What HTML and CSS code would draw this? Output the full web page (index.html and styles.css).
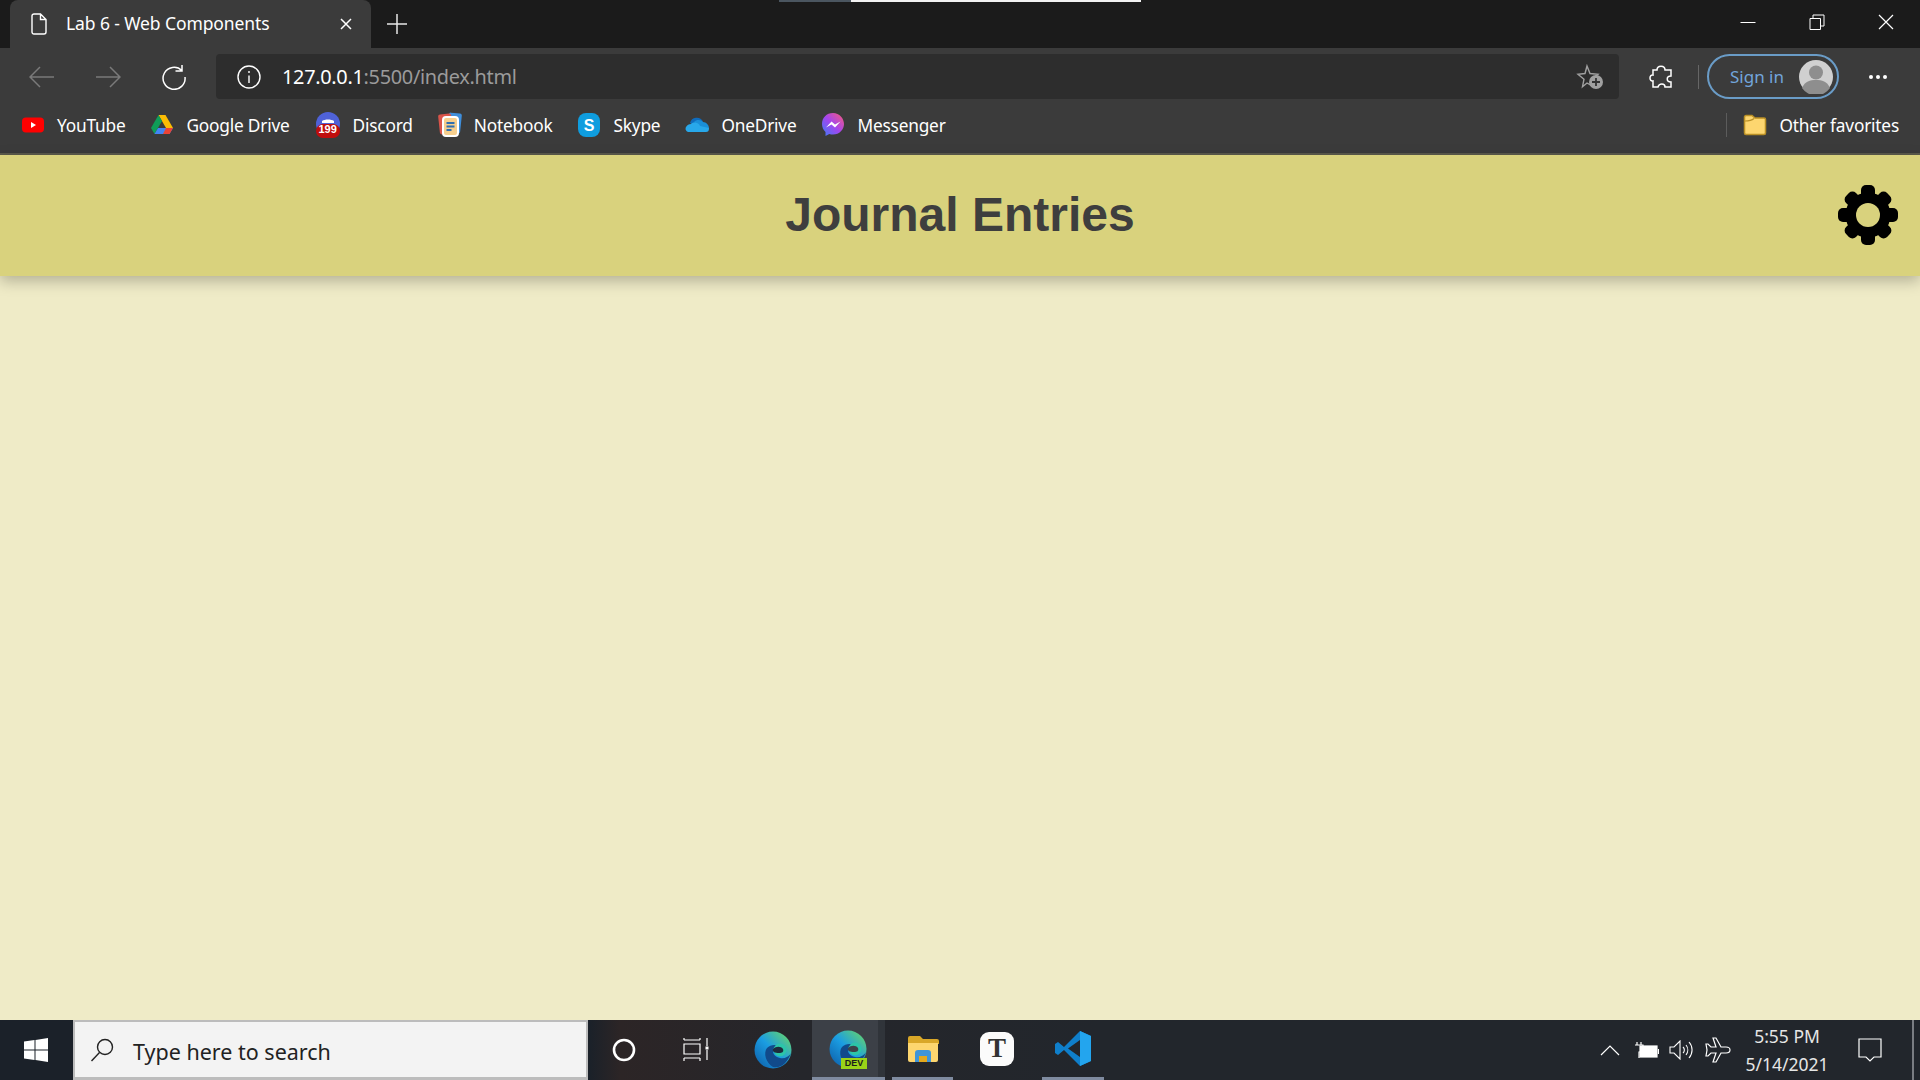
FILE: index.html

```html
<!DOCTYPE html>
<html>
<head>
  <meta charset="utf-8">
  <title>Lab 6 - Web Components</title>
  <link rel="stylesheet" href="styles.css">
</head>
<body>
  <div class="tab-strip">
    <div class="tab">
      <svg class="tab-doc" width="16" height="22" viewBox="0 0 16 22" fill="none" stroke="#fff" stroke-width="1.4"><path d="M3 1h6.5L15 6.500V19a2 2 0 0 1-2 2H3a2 2 0 0 1-2-2V3a2 2 0 0 1 2-2zM9.500 1v5.500H15"/></svg>
      <span class="tab-title">Lab 6 - Web Components</span>
      <svg class="tab-close" width="14" height="14" viewBox="0 0 14 14" stroke="#fff" stroke-width="1.500"><path d="M2 2l10 10M12 2L2 12"/></svg>
    </div>
    <svg class="tab-new" width="22" height="22" viewBox="0 0 22 22" stroke="#e8e8e8" stroke-width="1.500"><path d="M11 1v20M1 11h20"/></svg>
    <div class="progress"><div class="progress-dim"></div><div class="progress-lit"></div></div>
    <div class="window-btns">
      <svg width="16" height="16" viewBox="0 0 16 16" stroke="#fff"><path d="M0.500 8.500h15"/></svg>
      <svg width="16" height="16" viewBox="0 0 16 16" stroke="#fff" fill="none"><path d="M1 4.500h10.500v11H1zM4 4.500V1h11v11h-3.500"/></svg>
      <svg width="16" height="16" viewBox="0 0 16 16" stroke="#fff" stroke-width="1.200"><path d="M1 1l14 14M15 1L1 15"/></svg>
    </div>
  </div>

  <div class="toolbar">
    <svg class="nav-back" width="26" height="22" viewBox="0 0 26 22" fill="none" stroke="#7a7a7a" stroke-width="1.500"><path d="M1 11h24M11 1L1 11l10 10"/></svg>
    <svg class="nav-fwd" width="26" height="22" viewBox="0 0 26 22" fill="none" stroke="#7a7a7a" stroke-width="1.500"><path d="M1 11h24M15 1l10 10-10 10"/></svg>
    <svg class="nav-reload" width="26" height="26" viewBox="0 0 26 26" fill="none" stroke="#fff" stroke-width="1.500"><path d="M20.800 6.500A11 11 0 1 0 24 13M21 1v6h-6.500"/></svg>
    <div class="address">
      <svg class="addr-info" width="24" height="24" viewBox="0 0 24 24" fill="none" stroke="#fff" stroke-width="1.400"><circle cx="12" cy="12" r="11"/><path d="M12 10.500V18M12 6v2"/></svg>
      <span class="url"><span class="url-host">127.0.0.1</span>:5500/index.html</span>
      <svg class="addr-star" width="28" height="26" viewBox="0 0 28 26" fill="none" stroke="#a0a0a0" stroke-width="1.400"><path d="M11 2l3 7.500 8 .7-6 5 1.500 7.500L11 19l-4.500 3.700L8 15.200l-6-5 7-.7z"/><circle cx="20" cy="18" r="7" fill="#a0a0a0" stroke="none"/><path d="M20 14v8M16 18h8" stroke="#333" stroke-width="1.800"/></svg>
    </div>
    <svg class="tool-ext" width="24" height="26" viewBox="0 0 24 26" fill="none" stroke="#fff" stroke-width="1.500"><path d="M8 6c0-5 8-5 8 0h6v6c-5 0-5 6 0 6v5h-6c0-4-6-4-7 0H4v-6c-4 1-4-7 0-6V6z"/></svg>
    <div class="tool-divider"></div>
    <div class="signin">
      <span>Sign in</span>
      <svg width="34" height="34" viewBox="0 0 34 34"><circle cx="17" cy="17" r="17" fill="#d0d0d0"/><circle cx="17" cy="12.500" r="7" fill="#8e8e8e"/><path d="M3 28c3-7 8-8 14-8s11 1 14 8a17 17 0 0 1-28 0z" fill="#8e8e8e"/></svg>
    </div>
    <svg class="tool-more" width="20" height="6" viewBox="0 0 20 6" fill="#fff"><circle cx="3" cy="3" r="2"/><circle cx="10" cy="3" r="2"/><circle cx="17" cy="3" r="2"/></svg>
  </div>

  <div class="bookmarks">
    <div class="bm">
      <svg width="24" height="24" viewBox="0 0 24 24"><rect x="1" y="4.500" width="22" height="15" rx="4" fill="#f00"/><path d="M10 9v6l5-3z" fill="#fff"/></svg>
      <span>YouTube</span>
    </div>
    <div class="bm">
      <svg width="24" height="24" viewBox="0 0 24 24"><path d="M8.500 2h7L23 15h-7z" fill="#fbbc04"/><path d="M8.500 2L1 15l3.500 6L12 8z" fill="#0f9d58"/><path d="M8 15h15l-3.500 6h-15z" fill="#4285f4"/><path d="M16 15h7l-3.500 6H13z" fill="#ea4335"/></svg>
      <span>Google Drive</span>
    </div>
    <div class="bm bm-discord">
      <svg width="26" height="26" viewBox="0 0 26 26"><circle cx="13" cy="12" r="12" fill="#4f62d8"/><path d="M7 9c3-2 9-2 12 0v2H7z" fill="#fff"/><rect x="1" y="12" width="24" height="14" rx="7" fill="#c00d0d"/></svg>
      <span class="badge">199</span>
      <span>Discord</span>
    </div>
    <div class="bm">
      <svg width="24" height="26" viewBox="0 0 24 26"><rect x="10" y="1" width="13" height="20" rx="2" fill="#3f8fdc" transform="rotate(6 16 11)"/><rect x="1" y="2" width="13" height="20" rx="2" fill="#d9544a" transform="rotate(-6 7 12)"/><rect x="5" y="5" width="15" height="19" rx="3" fill="#f6cf8e" stroke="#fff" stroke-width="2"/><path d="M8.500 11h8M8.500 14.500h8M8.500 18h5" stroke="#2f6fb0" stroke-width="1.800"/></svg>
      <span>Notebook</span>
    </div>
    <div class="bm">
      <svg width="24" height="26" viewBox="0 0 24 26"><rect x="1" y="1" width="22" height="24" rx="8" fill="#0f9ddf"/><text x="12" y="18.500" class="skype-s">S</text></svg>
      <span>Skype</span>
    </div>
    <div class="bm">
      <svg width="24" height="24" viewBox="0 0 24 24"><path d="M5 10a7 7 0 0 1 13-1.500L12 14z" fill="#0f6cbd"/><path d="M9 9c3-3 7-2 9 0 3 0 6 3 6 6l-9 1z" fill="#1a8fd8"/><path d="M3 19a3.500 3.500 0 0 1-2-5c1-2 3-3 5-3 3-3 8-1 9 2l9 2c0 3-1 4-3 4z" fill="#28a8ea"/></svg>
      <span>OneDrive</span>
    </div>
    <div class="bm">
      <svg width="24" height="26" viewBox="0 0 24 26"><defs><linearGradient id="msgr" x1="0" y1="1" x2="1" y2="0"><stop offset="0" stop-color="#3c7cf6"/><stop offset=".5" stop-color="#a445ee"/><stop offset="1" stop-color="#fb5b78"/></linearGradient></defs><path d="M12 1C5.500 1 1 5.700 1 12c0 3.300 1.300 6 3.500 8v4l3.800-2.100c1.200.4 2.400.6 3.700.6 6.500 0 11-4.900 11-10.500S18.500 1 12 1z" fill="url(#msgr)"/><path d="M5 15.500L10.500 9.500l3.500 3 5.500-3-5.500 6-3.500-3z" fill="#fff"/></svg>
      <span>Messenger</span>
    </div>
    <div class="bm-divider"></div>
    <div class="bm bm-other">
      <svg width="24" height="22" viewBox="0 0 24 22"><path d="M1.500 3a1.500 1.500 0 0 1 1.500-1.500h6L12 4h9a1.500 1.500 0 0 1 1.500 1.500V19a1.500 1.500 0 0 1-1.500 1.500H3A1.500 1.500 0 0 1 1.500 19z" fill="#fdd66f" stroke="#b98f25" stroke-width="1.500"/><path d="M2 7c3 0 6 0 9-2.500" fill="none" stroke="#b98f25" stroke-width="1.200"/></svg>
      <span>Other favorites</span>
    </div>
  </div>

  <div class="page">
    <header class="site-header">
      <div></div>
      <h1>Journal Entries</h1>
      <svg class="gear" width="60" height="60" viewBox="0 0 60 60">
        <circle cx="30" cy="30" r="17.500" fill="none" stroke="#000" stroke-width="10"/>
        <rect x="23" y="0" width="14" height="60" rx="5"/>
        <rect x="23" y="1" width="14" height="58" rx="5" transform="rotate(45 30 30)"/>
        <rect x="23" y="0" width="14" height="60" rx="5" transform="rotate(90 30 30)"/>
        <rect x="23" y="1" width="14" height="58" rx="5" transform="rotate(135 30 30)"/>
        <circle cx="30" cy="30" r="12" class="gear-hole"/>
      </svg>
    </header>
  </div>

  <div class="taskbar">
    <div class="start">
      <svg width="24" height="24" viewBox="0 0 24 24" fill="#fff"><path d="M0 3.500l10.500-1.400v9.400H0zM11.500 2L24 0v11.500H11.500zM0 12.500h10.500v9.400L0 20.500zM11.500 12.500H24V24l-12.500-2z"/></svg>
    </div>
    <div class="search">
      <svg width="24" height="24" viewBox="0 0 24 24" fill="none" stroke="#222" stroke-width="1.400"><circle cx="15" cy="9" r="7.500"/><path d="M9.500 14.500L1.500 23"/></svg>
      <span class="search-text">Type here to search</span>
    </div>
    <div class="task-icon cortana"><svg width="24" height="24" viewBox="0 0 24 24" fill="none" stroke="#fff" stroke-width="2.600"><circle cx="12" cy="12" r="10"/></svg></div>
    <div class="task-icon taskview"><svg width="26" height="24" viewBox="0 0 26 24" fill="none" stroke="#fff" stroke-width="1.200"><path d="M1 3h16M1 1v2M17 1v2M1 7h16v10H1zM1 21h16M1 21v3M17 21v3M24 1v8M24 13v10"/><rect x="22.500" y="9.500" width="3" height="3" fill="#fff" stroke="none"/></svg></div>
    <div class="task-icon edge">
      <svg width="38" height="38" viewBox="0 0 38 38"><defs><linearGradient id="edg" x1="0" y1="1" x2="1" y2="0"><stop offset="0" stop-color="#0c59a4"/><stop offset=".5" stop-color="#1b9de2"/><stop offset="1" stop-color="#6fdc5c"/></linearGradient></defs><circle cx="19" cy="19" r="18.500" fill="url(#edg)"/><path d="M37 22c-2 4-7 6-11 5-5-1-9-5-6-10 1-2 3-2 4-2-3-2-8-1-11 2-4 5-1 15 6 19 8 2 15-5 18-14z" fill="#114a8b"/><circle cx="26" cy="19" r="6.500" fill="#2cc5a8"/><path d="M19 18c3-3 8-3 10 0 1 3-1 4-4 4-4 0-7-1-6-4z" fill="#1d2b3d"/></svg>
    </div>
    <div class="task-icon edge-dev">
      <svg width="38" height="38" viewBox="0 0 38 38"><circle cx="19" cy="19" r="18.500" fill="url(#edg)"/><path d="M37 22c-2 4-7 6-11 5-5-1-9-5-6-10 1-2 3-2 4-2-3-2-8-1-11 2-4 5-1 15 6 19 8 2 15-5 18-14z" fill="#114a8b"/><circle cx="26" cy="19" r="6.500" fill="#2cc5a8"/><path d="M19 18c3-3 8-3 10 0 1 3-1 4-4 4-4 0-7-1-6-4z" fill="#3d4249"/></svg>
      <span class="dev-tag">DEV</span>
    </div>
    <div class="task-sep"></div>
    <div class="task-icon files">
      <svg width="32" height="28" viewBox="0 0 32 28"><path d="M1 3a2 2 0 0 1 2-2h10l3 3h14a2 2 0 0 1 2 2v3H1z" fill="#d9a728"/><path d="M1 8h30v17a2 2 0 0 1-2 2H3a2 2 0 0 1-2-2z" fill="#fdd66f"/><path d="M8 27V18a3 3 0 0 1 3-3h10a3 3 0 0 1 3 3v9h-4v-6h-8v6z" fill="#3f95d8"/><rect x="12" y="21" width="8" height="6" fill="#e3a91e"/></svg>
    </div>
    <div class="task-icon typora"><span>T</span></div>
    <div class="task-icon vscode">
      <svg width="36" height="37" viewBox="0 0 36 37"><path d="M25 1L9 17 3 12 0 14v9l3 2 6-5 16 16 11-5V6z" fill="#0f7fcb"/><path d="M25 1l11 5v25l-11 5z" fill="#23a5ee"/><path d="M25 10L13 18.500 25 27z" fill="#22262c"/></svg>
    </div>
    <div class="tray">
      <svg class="tray-up" width="20" height="12" viewBox="0 0 20 12" fill="none" stroke="#fff" stroke-width="1.200"><path d="M1 11l9-9 9 9"/></svg>
      <svg class="tray-batt" width="24" height="17" viewBox="0 0 24 17" fill="none" stroke="#fff" stroke-width="1.200"><rect x="5" y="4" width="17" height="11" fill="#fff"/><path d="M23.500 7v5M2 0v3M6 0v3M0 3h8v3a4 4 0 0 1-4 4v6"/></svg>
      <svg class="tray-vol" width="24" height="20" viewBox="0 0 24 20" fill="none" stroke="#fff" stroke-width="1.100"><path d="M1 7h4l6-6v18l-6-6H1zM14 7a4 4 0 0 1 0 6M17 5a8 8 0 0 1 0 10M20 2a12 12 0 0 1 0 16"/></svg>
      <svg class="tray-air" width="26" height="26" viewBox="0 0 26 26" fill="none" stroke="#fff" stroke-width="1.200"><path d="M25 13c0-2-2-3-4-3h-5L11 1H8l3 9H6L3 7H1l1 6-1 6h2l3-3h5l-3 9h3l5-9h5c2 0 4-1 4-3z"/></svg>
      <div class="clock">
        <span>5:55 PM</span>
        <span>5/14/2021</span>
      </div>
      <svg class="tray-note" width="24" height="24" viewBox="0 0 24 24" fill="none" stroke="#fff" stroke-width="1.200"><path d="M1 1h22v18h-7l-4 4-4-4H1z"/></svg>
      <div class="show-desktop"></div>
    </div>
  </div>
</body>
</html>
```

FILE: styles.css

```css
html, body {
  height: 100%;
}
body {
  margin: 0;
  padding: 0;
  display: flex;
  flex-direction: column;
  overflow: hidden;
  font-family: "Noto Sans", sans-serif;
  background: #efebc7;
}
svg {
  display: block;
  flex: none;
}

/* tab strip */
.tab-strip {
  position: relative;
  height: 48px;
  display: flex;
  align-items: center;
  background: #1b1b1b;
}
.tab {
  width: 361px;
  height: 48px;
  margin-left: 10px;
  box-sizing: border-box;
  padding: 0 18px 0 21px;
  display: flex;
  align-items: center;
  background: #3b3b3b;
  border-radius: 8px 8px 0 0;
  color: #fff;
}
.tab-title {
  margin: 0 0 2px 19px;
  font-size: 17.500px;
  letter-spacing: -0.1px;
}
.tab-close {
  margin-left: auto;
}
.tab-new {
  margin-left: 15px;
}
.progress {
  position: absolute;
  top: 0;
  left: 779px;
  display: flex;
  height: 2px;
}
.progress-dim {
  width: 72px;
  background: #4b5660;
}
.progress-lit {
  width: 290px;
  background: #f2f2f2;
}
.window-btns {
  margin-left: auto;
  padding-right: 26px;
  display: flex;
  gap: 53px;
  margin-top: -5px;
}

/* toolbar */
.toolbar {
  height: 57px;
  box-sizing: border-box;
  padding: 6px 0 6px 29px;
  display: flex;
  align-items: center;
  background: #3b3b3b;
}
.nav-fwd {
  margin-left: 40px;
}
.nav-reload {
  margin-left: 40px;
}
.address {
  width: 1403px;
  height: 45px;
  margin-left: 29px;
  box-sizing: border-box;
  padding: 0 15px 0 21px;
  display: flex;
  align-items: center;
  background: #2d2d2d;
  border-radius: 4px;
}
.url {
  margin-left: 21px;
  font-size: 19.900px;
  letter-spacing: -0.3px;
  color: #9b9b9b;
}
.url-host {
  color: #fff;
}
.addr-star {
  margin-left: auto;
}
.tool-ext {
  margin-left: 30px;
}
.tool-divider {
  width: 1px;
  height: 24px;
  margin-left: 25px;
  background: #666;
}
.signin {
  width: 132px;
  height: 45px;
  margin-left: 8px;
  box-sizing: border-box;
  padding: 0 4px 0 21px;
  display: flex;
  align-items: center;
  justify-content: space-between;
  border: 2px solid #6a9cc7;
  border-radius: 23px;
  font-size: 17px;
  color: #72a5db;
}
.tool-more {
  margin-left: 29px;
}

/* favorites bar */
.bookmarks {
  height: 48px;
  box-sizing: border-box;
  padding: 0 0 8px 21px;
  display: flex;
  align-items: center;
  background: #3b3b3b;
  font-size: 17.300px;
  letter-spacing: -0.2px;
  color: #fff;
}
.bm {
  position: relative;
  display: flex;
  align-items: center;
  gap: 12px;
  margin-right: 25px;
  white-space: nowrap;
}
.badge {
  position: absolute;
  left: 1px;
  top: 11px;
  width: 24px;
  text-align: center;
  font-family: "Liberation Sans", sans-serif;
  font-size: 11px;
  font-weight: 700;
  letter-spacing: 0;
}
.skype-s {
  fill: #fff;
  font-family: "Liberation Sans", sans-serif;
  font-size: 16px;
  font-weight: 700;
  text-anchor: middle;
}
.bm-divider {
  width: 1px;
  height: 24px;
  margin-left: auto;
  background: #5c5c5c;
}
.bm-other {
  margin: 0 21px 0 16px;
}

/* the page in the browser */
.page {
  flex: 1;
  border-top: 2px solid #5b5a4c;
  background: #efebc7;
}
.site-header {
  height: 121px;
  box-sizing: border-box;
  padding: 0 22px 2px 0;
  display: grid;
  grid-template-columns: 1fr auto 1fr;
  align-items: center;
  background: #d9d27d;
  box-shadow: 0 5px 14px rgba(0, 0, 0, .25);
}
.site-header h1 {
  margin: 0 0 0 22px;
  font-family: "Liberation Sans", sans-serif;
  font-size: 48px;
  font-weight: 700;
  color: #3e3e3e;
}
.gear {
  justify-self: end;
}
.gear-hole {
  fill: #d9d27d;
}

/* taskbar */
.taskbar {
  height: 60px;
  display: flex;
  align-items: center;
  background: linear-gradient(90deg, #1b2129 0, #1b2129 590px, #2c2526 620px, #25262b 800px, #22262c 1100px);
  color: #fff;
}
.start {
  width: 73px;
  padding-right: 2px;
  box-sizing: border-box;
  display: flex;
  justify-content: center;
}
.search {
  width: 515px;
  height: 60px;
  box-sizing: border-box;
  padding-left: 15px;
  display: flex;
  align-items: center;
  gap: 19px;
  background: #f3f3f3;
  border: 2px solid #bcbcbc;
  border-bottom-width: 3px;
  font-size: 21.500px;
  color: #222;
}
.search-text {
  margin-top: 4px;
}
.task-icon {
  position: relative;
  display: flex;
  align-items: center;
  justify-content: center;
  height: 60px;
  box-sizing: border-box;
}
.task-icon.cortana {
  width: 72px;
}
.task-icon.taskview {
  width: 72px;
  padding-bottom: 2px;
}
.task-icon.edge {
  width: 80px;
  padding-left: 2px;
}
.task-icon.edge-dev {
  width: 66px;
  padding-left: 5px;
  background: #3c4047;
  border-bottom: 3px solid #7f8ba0;
}
.dev-tag {
  position: absolute;
  right: 11px;
  bottom: 8px;
  width: 26px;
  height: 11px;
  background: #9ad318;
  color: #1c1c1c;
  font-family: "Liberation Sans", sans-serif;
  font-size: 9px;
  line-height: 11px;
  font-weight: 700;
  text-align: center;
}
.task-sep {
  width: 7px;
  height: 60px;
  box-sizing: border-box;
  background: #30343a;
  border-bottom: 3px solid #7f8ba0;
}
.task-icon.files {
  width: 61px;
  margin-left: 7px;
  border-bottom: 3px solid #7f8ba0;
}
.task-icon.typora {
  width: 34px;
  height: 34px;
  margin: 0 0 3px 27px;
  background: #fbfbfb;
  border-radius: 9px;
  color: #333;
  font-family: "Liberation Serif", serif;
  font-size: 27px;
  font-weight: 700;
}
.task-icon.vscode {
  width: 62px;
  margin-left: 28px;
  border-bottom: 3px solid #7f8ba0;
}
.tray {
  flex: 1;
  height: 60px;
  display: flex;
  align-items: center;
}
.tray-up {
  margin-left: auto;
}
.tray-batt {
  margin-left: 15px;
}
.tray-vol {
  margin-left: 10px;
}
.tray-air {
  margin-left: 12px;
}
.clock {
  width: 100px;
  margin-left: 6px;
  display: flex;
  flex-direction: column;
  align-items: center;
  gap: 4px;
  font-size: 17.500px;
  line-height: 24px;
  color: #e6e6e6;
}
.tray-note {
  margin-left: 21px;
}
.show-desktop {
  width: 8px;
  height: 60px;
  margin-left: 30px;
  box-sizing: border-box;
  border-left: 2px solid #7a7d82;
}
```
